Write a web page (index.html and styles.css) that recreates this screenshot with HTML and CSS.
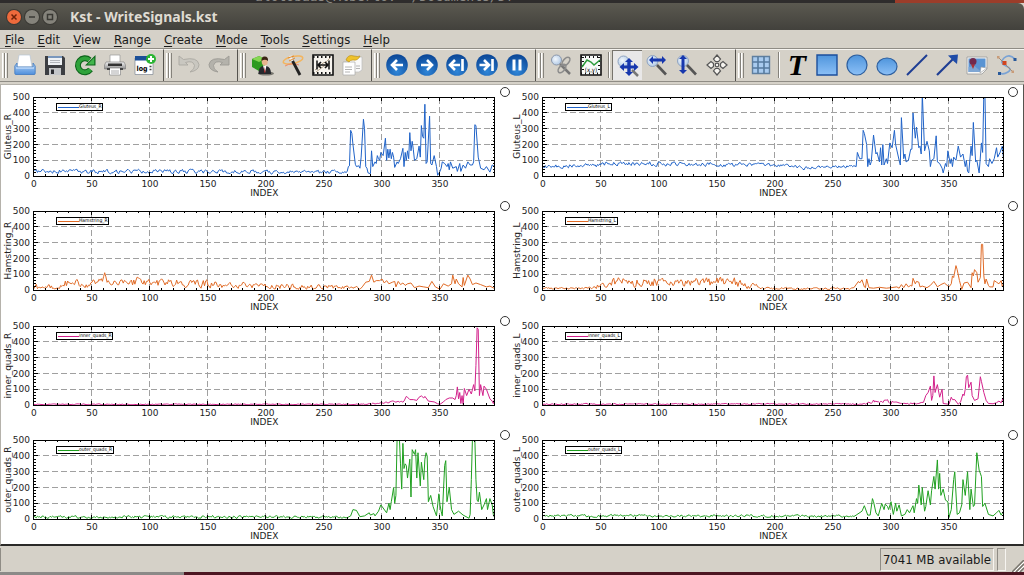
FILE: index.html
```html
<!DOCTYPE html>
<html lang="en">
<head>
  <meta charset="UTF-8" />
  <meta name="viewport" content="width=device-width, initial-scale=1.0" />
  <title>Kst - WriteSignals.kst</title>
  <link rel="stylesheet" href="styles.css">
</head>
<body>
  <div class="desktop-top"><span>alotobaas@Alberto: ~/Documents/DT</span></div>

  <header class="title-bar">
    <button class="win-btn close" aria-label="Close"><svg viewBox="0 0 14 14"><path d="M4.5 4.5l5 5M9.5 4.5l-5 5"/></svg></button>
    <button class="win-btn" aria-label="Minimize"><svg viewBox="0 0 14 14"><path d="M4 7h6"/></svg></button>
    <button class="win-btn" aria-label="Maximize"><svg viewBox="0 0 14 14"><path d="M4.5 4.5h5v5h-5z"/></svg></button>
    <h1>Kst - WriteSignals.kst</h1>
  </header>

  <nav class="menu-bar">
    <button><u>F</u>ile</button>
    <button><u>E</u>dit</button>
    <button><u>V</u>iew</button>
    <button><u>R</u>ange</button>
    <button><u>C</u>reate</button>
    <button><u>M</u>ode</button>
    <button><u>T</u>ools</button>
    <button><u>S</u>ettings</button>
    <button><u>H</u>elp</button>
  </nav>

  <svg class="defs" aria-hidden="true">
    <defs>
      <linearGradient id="blue" x1="0" y1="0" x2="0" y2="1"><stop offset="0" stop-color="#4f95dc"/><stop offset="1" stop-color="#8cc0f7"/></linearGradient>
      <linearGradient id="tray" x1="0" y1="0" x2="0" y2="1"><stop offset="0" stop-color="#b5d5f7"/><stop offset="1" stop-color="#4f8fdc"/></linearGradient>
      <radialGradient id="ball" cx=".5" cy=".8" r=".8"><stop offset="0" stop-color="#2f86d8"/><stop offset="1" stop-color="#0a4595"/></radialGradient>
      <radialGradient id="lens" cx=".4" cy=".4" r=".7"><stop offset="0" stop-color="#f3f8fd"/><stop offset="1" stop-color="#a9c3e2"/></radialGradient>
      <linearGradient id="steel" x1="0" y1="0" x2="0" y2="1"><stop offset="0" stop-color="#f4f4f4"/><stop offset="1" stop-color="#8d8d8d"/></linearGradient>
    </defs>
  </svg>

  <div class="tool-bar">
    <div class="group">
      <button aria-label="Open"><svg viewBox="0 0 22 22"><path d="M5 1h11l2 12H3z" fill="#fff" stroke="#b8c6d6" stroke-width=".7"/><path d="M3 9L.8 12v7.500q0 1 1 1h18.400q1 0 1-1V12L19 9v4H3z" fill="url(#tray)" stroke="#3f78c0" stroke-width=".8"/><path d="M2 14h18" stroke="#d9eaff"/></svg></button>
      <button aria-label="Save"><svg viewBox="0 0 22 22"><path d="M1 2h18l2 2v17H1z" fill="#3d3f43"/><path d="M4 2h14v9H4z" fill="#eef1f4"/><path d="M4 2h14v2H4z" fill="#7997bd"/><path d="M6 6.500h10M6 8.500h10" stroke="#b4b8bd"/><path d="M5 14h12v7H5z" fill="#c4c6c8"/><path d="M7 15.500h3V20H7z" fill="#2c2d30"/></svg></button>
      <button aria-label="Reload"><svg viewBox="0 0 22 22"><path d="M16.500 15.500A7 7 0 1 1 15.500 6" fill="none" stroke="#0d641b" stroke-width="6"/><path d="M21.500 1v10.500H11z" fill="#0d641b"/><path d="M16.500 15.500A7 7 0 1 1 15.500 6" fill="none" stroke="#2fa23b" stroke-width="3.800"/><path d="M20.300 3.500v7h-7z" fill="#43b54d"/></svg></button>
      <button aria-label="Print"><svg viewBox="0 0 22 22"><path d="M6 1h10v8H6z" fill="#fff" stroke="#999" stroke-width=".7"/><path d="M2 8h18l1.500 3v4H.5v-4z" fill="url(#steel)" stroke="#777" stroke-width=".6"/><path d="M4 9.500h14v2.500H4z" fill="#333"/><path d="M5.500 14h11v7h-11z" fill="#fff" stroke="#888" stroke-width=".7"/><path d="M7 17h8M7 19h8" stroke="#aaa"/><path d="M3 15h3M16 15h3" stroke="#444" stroke-width="2"/></svg></button>
      <button aria-label="Log"><svg viewBox="0 0 22 22"><path d="M1 4h18v16.500H1z" fill="#fff" stroke="#7f8894" stroke-width=".7"/><path d="M1 2h17v4.500H1z" fill="#1b4f98"/><text x="2.500" y="17" class="log-text">log</text><path d="M15.500 12.500h2M15.500 15.500h2" stroke="#444" stroke-width="1.500"/><circle cx="17" cy="5" r="5" fill="#2bb534"/><path d="M17 2v6M14 5h6" stroke="#fff" stroke-width="2"/></svg></button>
    </div>
    <div class="group">
      <button aria-label="Undo" disabled><svg viewBox="0 0 22 22"><path d="M1 2v9h9L7.500 8.500Q15 6 16.500 11.500 17 15 12 18q9-1.500 9-7.500Q19.500 2.500 5.500 5.500z" fill="#c9c7c0" stroke="#aaa8a1" stroke-width=".9"/></svg></button>
      <button aria-label="Redo" disabled><svg viewBox="0 0 22 22"><path d="M21 2v9h-9l2.500-2.500Q7 6 5.500 11.500 5 15 10 18q-9-1.500-9-7.500Q2.500 2.500 16.500 5.500z" fill="#b4b2ab" stroke="#9c9a94" stroke-width=".9"/></svg></button>
    </div>
    <div class="group">
      <button aria-label="Data manager"><svg viewBox="0 0 22 22"><path d="M0 5l7-3 6 3v9l-6 3-7-4z" fill="#2d9a20"/><path d="M0 5l7 3 6-3-6-3z" fill="#86d653"/><ellipse cx="14" cy="19.500" rx="8" ry="2" fill="#77756e"/><path d="M6.500 20q0-7 4-8h4q4.500 1 4.500 8z" fill="#25282d"/><path d="M11 11.500h3.500l-1.500 7z" fill="#fff"/><path d="M12.700 12.500l.8 6h-1.400z" fill="#b12020"/><ellipse cx="12.700" cy="7.500" rx="3" ry="4" fill="#e6b58e"/><path d="M9.500 7Q9 2.500 12.700 2.500 16.500 2.500 16 7q-3-2.500-6.500 0z" fill="#3b2414"/></svg></button>
      <button aria-label="Data wizard"><svg viewBox="0 0 22 22"><ellipse cx="11" cy="6" rx="10" ry="3.500" fill="none" stroke="#f3b55f" stroke-width="1.500" transform="rotate(-12 11 6)"/><path d="M3 12Q10 8 17 11" fill="none" stroke="#f08a6a"/><path d="M9 4l9 17" stroke="#222" stroke-width="2.800"/><path d="M8 2l2.500 5" stroke="#f0f0ee" stroke-width="3"/><path d="M6 4l6-2M7 7l6-3" stroke="#e58b2c"/></svg></button>
      <button aria-label="Change data sample ranges"><svg viewBox="0 0 22 22"><path d="M1 1h20v20H1z" fill="#f7f4ee" stroke="#111" stroke-width="1.600"/><path d="M1 3h20M1 19h20" stroke="#111" stroke-width="2" stroke-dasharray="1.500 2.500"/><path d="M3 16l5-4 3-3 3-1 5-5M4 18l8-6 6-3" fill="none" stroke="#b9a78e"/><path d="M5 6.500v9M17 6.500v9" stroke="#111" stroke-width="1.500"/><path d="M6 11h10M9 8l-3 3 3 3M13 8l3 3-3 3" fill="none" stroke="#111" stroke-width="1.600"/></svg></button>
      <button aria-label="Change data file"><svg viewBox="0 0 22 22"><path d="M7 3h13v13l-3 2H7z" fill="#fafafa" stroke="#bbb" stroke-width=".7"/><path d="M1 8h12v13H1z" fill="#fff" stroke="#aaa" stroke-width=".7"/><path d="M3 13h7M3 15.500h7M3 18h5M14 12h4M14 14.500h4" stroke="#b4b4b4"/><path d="M4 6Q6 0 12 2q4 1 6 0-2 5-7 4Q8 6 7 8z" fill="#efc229" stroke="#b58a10" stroke-width=".6"/></svg></button>
    </div>
    <div class="group">
      <button aria-label="Back"><svg viewBox="0 0 22 22"><circle cx="11" cy="11" r="10.800" fill="url(#ball)"/><path d="M17 11H7M11 6l-5 5 5 5" class="nav-mark"/></svg></button>
      <button aria-label="Forward"><svg viewBox="0 0 22 22"><circle cx="11" cy="11" r="10.800" fill="url(#ball)"/><path d="M5 11h10M11 6l5 5-5 5" class="nav-mark"/></svg></button>
      <button aria-label="Go to beginning"><svg viewBox="0 0 22 22"><circle cx="11" cy="11" r="10.800" fill="url(#ball)"/><path d="M14 11H5M9 6l-5 5 5 5M16.500 5v12" class="nav-mark"/></svg></button>
      <button aria-label="Go to end"><svg viewBox="0 0 22 22"><circle cx="11" cy="11" r="10.800" fill="url(#ball)"/><path d="M3.500 11H12M8 6l5 5-5 5M16.500 5v12" class="nav-mark"/></svg></button>
      <button aria-label="Pause"><svg viewBox="0 0 22 22"><circle cx="11" cy="11" r="10.800" fill="url(#ball)"/><path d="M8 5.500v11M14 5.500v11" stroke="#fff" stroke-width="3"/></svg></button>
    </div>
    <div class="group">
      <button aria-label="Tied zoom"><svg viewBox="0 0 22 22"><circle cx="6.500" cy="6" r="5" fill="url(#lens)" stroke="#8b97aa"/><path d="M10 10l10 10" stroke="#777" stroke-width="2.500"/><ellipse cx="16" cy="7.500" rx="2.800" ry="5" transform="rotate(40 16 7.500)" fill="none" stroke="#8c8c8c" stroke-width="1.600"/><ellipse cx="12" cy="14.500" rx="2.800" ry="5" transform="rotate(40 12 14.500)" fill="none" stroke="#8c8c8c" stroke-width="1.600"/></svg></button>
      <button aria-label="Data mode"><svg viewBox="0 0 22 22"><path d="M1 1h20v20H1z" fill="#f8faf8" stroke="#111" stroke-width="1.600"/><path d="M1 3h20M1 19.500h20" stroke="#111" stroke-width="2" stroke-dasharray="1 3"/><path d="M3 3v16M19 3v16" stroke="#111" stroke-width="2" stroke-dasharray="1 3"/><path d="M2 13l5-7 4 2 3 3 6-5" fill="none" stroke="#2b9b3a" stroke-width="1.500"/><text x="11" y="17.500" text-anchor="middle" class="xy-text">(x,y)</text></svg></button>
      <span class="sep"></span>
      <button class="pressed" aria-label="XY zoom"><svg viewBox="0 0 22 22"><circle cx="6.500" cy="6.500" r="5.500" fill="url(#lens)" stroke="#8fa3c0"/><path d="M15 15l6 6" stroke="#777" stroke-width="2.500"/><path d="M12 3l4 4h-2.300v3.500H17V8l4.500 4-4.500 4v-2.500h-3.300V17H16l-4 4-4-4h2.300v-3.500H7V16l-4.500-4L7 8v2.500h3.300V7H8z" fill="#1737ad"/></svg></button>
      <button aria-label="X zoom"><svg viewBox="0 0 22 22"><circle cx="6.500" cy="7" r="5.500" fill="url(#lens)" stroke="#8fa3c0"/><path d="M11 11l9 9.500" stroke="#555" stroke-width="2.600"/><path d="M3 6l4-4v2.500h9V2l4 4-4 4V7.500H7V10z" fill="#1737ad"/></svg></button>
      <button aria-label="Y zoom"><svg viewBox="0 0 22 22"><circle cx="7" cy="7" r="5.500" fill="url(#lens)" stroke="#8fa3c0"/><path d="M11 11l9 9.500" stroke="#555" stroke-width="2.600"/><path d="M7 1l4 4H8.500v11H11l-4 4-4-4h2.500V5H3z" fill="#1737ad"/></svg></button>
      <button aria-label="Layout mode"><svg viewBox="0 0 22 22"><g fill="#f5f3ee" stroke="#555" stroke-width="1.200"><path d="M11 1l3.500 4-2 2.500h-3l-2-2.500zM11 21l3.500-4-2-2.500h-3l-2 2.500zM1 11l4-3.500 2.500 2v3l-2.500 2zM21 11l-4-3.500-2.500 2v3l2.500 2z"/><circle cx="11" cy="11" r="1.800"/></g></svg></button>
    </div>
    <div class="group last">
      <button aria-label="Plot"><svg viewBox="0 0 22 22"><path d="M2.500 2.500h17v17h-17z" fill="#a9cbef" stroke="#5f7f9f" stroke-width="1.400"/><path d="M2.500 8h17M2.500 14h17M8 2.500v17M14 2.500v17" stroke="#557a9e" stroke-width="1.600"/></svg></button>
      <span class="sep"></span>
      <button class="label-tool" aria-label="Label">T</button>
      <button aria-label="Box"><svg viewBox="0 0 22 22"><path d="M1 1h20v20H1z" fill="url(#blue)" stroke="#1c4f9c" stroke-width="1.400"/></svg></button>
      <button aria-label="Circle"><svg viewBox="0 0 22 22"><circle cx="11" cy="11" r="10" fill="url(#blue)" stroke="#2d5f9f" stroke-width="1.200"/></svg></button>
      <button aria-label="Ellipse"><svg viewBox="0 0 22 22"><ellipse cx="11" cy="12.500" rx="10" ry="8.500" fill="url(#blue)" stroke="#2d5f9f" stroke-width="1.200"/></svg></button>
      <button aria-label="Line"><svg viewBox="0 0 22 22"><path d="M1 21L21 1" stroke="#1d3d93" stroke-width="2"/></svg></button>
      <button aria-label="Arrow"><svg viewBox="0 0 22 22"><path d="M1 21L17 5" stroke="#1d3d93" stroke-width="2.200"/><path d="M22 .5L21 10l-3-2.500-3.500-3.500L12 1.500z" fill="#1f4ca8"/></svg></button>
      <button aria-label="Picture"><svg viewBox="0 0 22 22"><path d="M1 3h20v12l-5 5H1z" fill="#f7f7f5" stroke="#999" stroke-width=".8"/><path d="M2.500 4.500h17V13L15 18H2.500z" fill="#5a94d3"/><path d="M2.500 13l6-1 7 6h-13z" fill="#7fa6d3"/><circle cx="7" cy="7.500" r="3.500" fill="#722a4d"/><path d="M5 10.500L7 15l2-4.500" fill="#a33"/><path d="M14 19l1-6 6 1z" fill="#fff" stroke="#999" stroke-width=".6"/></svg></button>
      <button aria-label="SVG"><svg viewBox="0 0 22 22"><path d="M19 5Q13-1 8 4t2 8 2 6-8 1" fill="none" stroke="#7ba3d4" stroke-width="1.700"/><path d="M2 3l15 15" stroke="#a08a70"/><path d="M6.500 7h4v4h-4z" fill="#d2451e"/><path d="M17.500 4h3v3h-3zM2 18h3v3H2z" fill="#28599a"/><path d="M1 2h2.500v2.500H1zM15.500 16.500H18V19h-2.500z" fill="#c99c79"/></svg></button>
    </div>
  </div>

  <main class="plots" id="plots"></main>

  <footer class="status-bar">
    <span class="status-message"></span>
    <span class="status-memory">7041 MB available</span>
    <span class="status-slot"></span>
    <svg class="size-grip" viewBox="0 0 12 12"><path d="M0 12L12 0M4 12l8-8M8 12l4-4" stroke="#77746d" stroke-width="1.500"/><path d="M2 12L12 2M6 12l6-6" stroke="#fff"/></svg>
  </footer>
  <div class="desktop-bottom"></div>

  <script src="plots.js"></script>
</body>
</html>
```
FILE: styles.css
```css
:root {
  --panel: #d5d1c8;
  --panel-dark: #8f8c85;
  --panel-light: #f6f4f0;
  --text-color: #1a1a1a;
}

* {
  box-sizing: border-box;
}

body {
  margin: 0;
  height: 100vh;
  display: flex;
  flex-direction: column;
  overflow: hidden;
  background-color: var(--panel);
  color: var(--text-color);
  font-family: 'DejaVu Sans Condensed', 'DejaVu Sans', sans-serif;
  font-size: 13px;
}

button {
  padding: 0;
  border: none;
  background: none;
  color: inherit;
  font: inherit;
}

.defs {
  position: absolute;
  width: 0;
  height: 0;
}

.desktop-top {
  height: 3px;
  flex: none;
  overflow: hidden;
  padding-left: 255px;
  display: flex;
  align-items: flex-end;
  background: linear-gradient(90deg, #2e2c2c 87.4%, #9c3d2a 87.4%);
  color: #8a8883;
  font-family: 'DejaVu Sans Mono', monospace;
  font-size: 13px;
  line-height: 12px;
  white-space: nowrap;
}

.title-bar {
  height: 27px;
  flex: none;
  display: flex;
  align-items: center;
  gap: 4px;
  padding: 0 7px;
  background: linear-gradient(#5b5950, #42413c);
  border-radius: 0 6px 0 0;
}

.title-bar h1 {
  margin: 0 0 0 9px;
  font-family: 'Noto Sans', sans-serif;
  font-size: 14px;
  font-weight: 700;
  color: #dfdbd2;
}

.win-btn {
  width: 14px;
  height: 14px;
  border-radius: 50%;
  background-color: #85837b;
  box-shadow: 0 0 0 1px #3a3934;
}

.win-btn svg {
  display: block;
  fill: none;
  stroke: #3a3934;
  stroke-width: 1.5;
}

.win-btn.close {
  background-color: #ee6a3c;
}

.win-btn.close svg {
  stroke: #6d2108;
}

.menu-bar {
  height: 18px;
  flex: none;
  display: flex;
  align-items: center;
  gap: 13px;
  padding-left: 5px;
}

.menu-bar u {
  text-underline-offset: 2px;
}

.tool-bar {
  height: 34px;
  flex: none;
  display: flex;
  border-top: 1px solid var(--panel-dark);
  border-bottom: 1px solid var(--panel-dark);
}

.group {
  position: relative;
  flex: none;
  display: flex;
  align-items: center;
  padding: 0 3px 1px 10px;
  border-top: 1px solid var(--panel-light);
  border-right: 1px solid #55534e;
}

.group.last {
  flex: 1;
  border-right: none;
}

/* drag handle: two raised ridges */
.group::before {
  content: "";
  position: absolute;
  left: 2px;
  top: 3px;
  bottom: 3px;
  width: 6px;
  background: linear-gradient(90deg, #fff 0 1px, #e6e3dc 1px 2px, #85827b 2px 3px, #fff 3px 4px, #e6e3dc 4px 5px, #85827b 5px 6px);
}

.group button {
  width: 30px;
  height: 30px;
  flex: none;
  display: flex;
  align-items: center;
  justify-content: center;
}

.group button svg {
  width: 22px;
  height: 22px;
}

.group .pressed {
  background-color: #e9e8e8;
  border-top: 1px solid #77746d;
  border-left: 1px solid #77746d;
}

.group .label-tool {
  font-family: 'Liberation Serif', serif;
  font-size: 30px;
  line-height: 28px;
  font-weight: 700;
  font-style: italic;
  color: #000;
}

.sep {
  width: 2px;
  height: 26px;
  margin: 0 2px;
  border-left: 1px solid #85827b;
  border-right: 1px solid #fff;
}

.nav-mark {
  fill: none;
  stroke: #fff;
  stroke-width: 2.6;
}

.log-text {
  font-size: 7px;
  font-weight: 700;
}

.xy-text {
  font-size: 6px;
}

.plots {
  flex: 1;
  min-height: 0;
  margin-top: 2px;
  padding: 0 4px 2px 1px;
  display: grid;
  grid-template-columns: 1fr 1fr;
  grid-auto-rows: 1fr;
  background-color: #fff;
  border: 1px solid #b5b2ab;
  border-right-color: #55534e;
  border-bottom: 2px solid #2b2a28;
}

.plot {
  position: relative;
  margin: 0;
  min-width: 0;
  min-height: 0;
}

.plot svg {
  display: block;
  width: 100%;
  height: 100%;
  overflow: hidden;
}

.plot-tie {
  position: absolute;
  top: 2px;
  right: 1px;
  width: 10px;
  height: 10px;
  margin: 0;
  appearance: none;
  border: 1px solid #333;
  border-radius: 50%;
  background-color: #fff;
}

.plot text {
  font-family: 'DejaVu Sans', sans-serif;
  font-size: 9px;
  fill: #222;
}

.plot .legend-text {
  font-family: 'DejaVu Sans Condensed', 'DejaVu Sans', sans-serif;
  font-size: 5px;
  fill: #000;
}

.frame,
.ticks,
.grid-lines,
.legend-box {
  fill: none;
  stroke: #000;
  shape-rendering: crispEdges;
}

.grid-lines {
  stroke: #a0a0a0;
  stroke-dasharray: 6 3;
}

.legend-box {
  fill: #fff;
}

.trace {
  fill: none;
  stroke-width: 1;
  stroke-linejoin: round;
}

.legend-line {
  fill: none;
  shape-rendering: crispEdges;
}

.status-bar {
  height: 26px;
  flex: none;
  display: flex;
  align-items: center;
  gap: 3px;
  padding-top: 1px;
}

.status-message {
  flex: 1;
  height: 23px;
  border-left: 1px solid var(--panel-dark);
}

.status-memory,
.status-slot {
  height: 23px;
  border: 1px solid;
  border-color: var(--panel-dark) var(--panel-light) var(--panel-light) var(--panel-dark);
}

.status-memory {
  padding: 0 2px;
  line-height: 21px;
}

.status-slot {
  width: 9px;
}

.size-grip {
  width: 12px;
  height: 12px;
  margin-left: 3px;
  align-self: flex-end;
}

.desktop-bottom {
  height: 3px;
  flex: none;
  background: linear-gradient(90deg, #8b8a88 18%, #4d1622 18%);
}
```
FILE: plots.js
```js
const SAMPLES = 397;
const Y_MAX = 500;
const NS = 'http://www.w3.org/2000/svg';

// base: [index, level, noise] of the resting part, peaks: index,value pairs
const signals = [
  {
    name: 'Gluteus_R', color: '#1f62c8',
    base: [[0, 32, 16], [60, 28, 16], [110, 30, 15], [200, 26, 14], [270, 25, 12]],
    peaks: '271,60 272,65 273,290 274,270 275,200 277,75 278,60 280,65 281,50 282,120 284,360 285,300 286,60 287,50 288,20 290,15 291,160 292,60 294,90 295,80 296,130 297,110 298,100 299,150 301,130 303,240 304,100 305,170 306,115 307,170 308,110 309,150 310,120 311,55 313,90 314,80 316,110 318,176 319,60 320,150 321,100 322,160 323,110 324,275 325,160 326,220 327,170 328,100 330,110 332,190 333,120 334,320 335,250 336,240 337,455 338,80 339,90 341,380 342,80 343,70 345,130 347,60 348,5 350,30 351,50 352,90 354,80 356,60 357,80 358,40 359,90 361,50 364,60 365,30 367,80 368,30 370,70 372,50 374,90 376,70 378,70 379,90 380,325 381,320 383,120 385,50 388,40 390,60 393,25 395,70 397,60'
  },
  {
    name: 'Gluteus_L', color: '#1f62c8',
    base: [[0, 60, 14], [45, 68, 14], [60, 82, 18], [170, 72, 14], [215, 65, 10], [225, 50, 12], [268, 62, 10]],
    peaks: '270,60 271,150 273,110 275,110 276,290 277,270 279,200 280,60 281,110 282,70 283,90 285,260 287,140 288,150 290,90 291,180 292,70 293,200 294,70 296,110 297,80 299,210 301,180 303,290 304,200 307,100 308,70 309,370 311,110 312,140 313,90 315,100 317,170 318,170 319,400 321,240 322,310 324,180 325,190 326,140 327,520 329,160 331,220 333,160 334,60 335,100 337,110 339,255 340,90 342,80 344,50 345,20 347,80 348,60 349,160 351,80 352,110 353,60 354,120 356,100 358,190 360,120 362,140 364,60 365,100 366,30 367,20 369,190 370,130 371,340 373,90 374,100 376,20 378,210 379,150 380,520 381,520 382,80 384,60 385,110 387,80 389,110 391,180 392,120 394,150 396,190 397,110'
  },
  {
    name: 'Hamstring_R', color: '#e06a26',
    base: [[0, 20, 22], [22, 18, 12], [25, 40, 28], [50, 45, 30], [59, 60, 20], [61, 112, 6], [63, 50, 20], [88, 50, 28], [91, 82, 14], [94, 50, 28], [150, 42, 30], [160, 32, 24], [220, 25, 20], [280, 15, 12]],
    peaks: '281,5 283,20 286,50 289,55 291,95 293,50 295,60 298,60 300,70 302,45 304,60 306,40 309,50 311,55 312,20 314,55 316,35 318,45 320,30 322,40 325,45 328,15 332,25 336,20 340,15 343,55 346,20 350,5 353,40 357,25 360,40 361,95 363,40 364,70 366,40 369,20 370,80 371,30 374,95 376,70 378,35 381,45 385,35 390,20 393,25 397,10'
  },
  {
    name: 'Hamstring_L', color: '#e06a26',
    base: [[0, 9, 7], [38, 10, 8], [50, 28, 20], [60, 52, 36], [165, 48, 34], [180, 30, 24], [192, 10, 8], [266, 9, 6]],
    peaks: '268,15 272,55 273,45 275,65 277,20 278,15 279,70 281,15 285,12 290,18 296,12 300,15 305,20 307,12 309,35 311,15 313,40 315,20 317,30 318,25 319,75 321,40 322,55 324,50 325,20 327,25 331,15 334,30 337,55 340,20 343,35 346,45 350,20 352,40 353,90 354,80 356,155 357,130 359,60 361,5 363,45 366,50 369,15 370,110 371,90 372,130 374,110 375,50 377,80 378,290 379,290 380,90 381,40 382,70 384,30 385,20 388,20 389,60 391,50 393,40 395,60 396,20 397,40'
  },
  {
    name: 'inner_quads_R', color: '#d2208b',
    base: [[0, 5, 3], [285, 5, 3], [300, 16, 8], [318, 20, 8]],
    peaks: '319,25 321,55 322,50 324,35 327,35 330,30 332,50 334,58 336,45 337,55 340,25 345,20 348,8 350,5 353,20 355,35 358,45 361,45 363,35 364,60 365,115 366,40 367,80 368,10 369,60 370,5 371,105 373,60 375,100 377,70 379,130 380,90 381,250 382,490 383,480 384,60 385,130 387,60 388,120 390,100 393,40 395,25 396,10 397,40'
  },
  {
    name: 'inner_quads_L', color: '#d2208b',
    base: [[0, 6, 4], [278, 7, 4], [285, 26, 16], [300, 20, 14], [308, 7, 5], [326, 12, 6]],
    peaks: '328,18 330,60 332,80 334,120 335,30 336,60 337,185 338,80 340,130 342,50 344,100 345,10 350,5 352,50 353,35 355,35 358,5 360,20 362,70 363,60 364,100 365,180 366,190 367,110 369,145 370,60 372,30 375,40 377,180 378,150 380,80 382,30 384,10 388,8 391,15 393,25 395,15 397,50'
  },
  {
    name: 'outer_quads_R', color: '#1fa01f',
    base: [[0, 14, 9], [60, 13, 9], [130, 16, 12], [270, 12, 8]],
    peaks: '273,20 275,60 278,55 281,15 285,20 289,40 290,25 293,35 294,20 297,50 299,90 301,70 304,40 306,100 307,60 308,110 310,200 311,100 312,150 313,510 315,510 316,350 317,190 318,480 319,320 320,350 321,340 322,260 324,380 325,140 326,440 328,410 329,440 330,260 331,420 333,210 334,360 336,250 337,380 338,420 339,400 340,110 342,150 344,80 347,20 349,160 350,90 351,50 352,20 354,340 355,370 356,110 358,200 360,60 362,30 366,50 370,25 375,5 376,30 377,250 378,510 380,510 381,250 382,120 383,110 384,170 386,60 388,90 390,130 391,60 393,130 395,90 396,30 397,10'
  },
  {
    name: 'outer_quads_L', color: '#1fa01f',
    base: [[0, 20, 9], [140, 22, 9], [268, 18, 8]],
    peaks: '270,25 275,50 277,85 280,25 282,25 284,130 285,110 287,40 289,20 292,100 294,60 295,95 297,80 298,60 300,110 302,30 304,100 305,50 307,90 309,20 312,30 314,60 316,40 319,85 320,40 322,130 323,100 324,215 326,90 327,200 329,50 330,80 332,180 334,90 335,180 337,270 338,190 340,375 341,190 342,290 343,150 345,190 347,120 349,110 350,10 352,60 354,250 355,300 357,30 359,40 361,90 362,250 364,150 366,300 368,60 369,190 371,80 372,90 374,420 376,310 378,270 379,80 381,100 384,30 388,20 391,40 393,55 395,25 397,50'
  }
];

function samplesOf(signal, seed) {
  let state = seed * 7919 + 17;
  const random = () => {
    state = (state * 16807) % 2147483647;
    return state / 2147483647 - 0.5;
  };
  random();
  const points = [];
  const base = signal.base;
  let noise = 0;
  for (let i = 0, k = 0; i <= base[base.length - 1][0]; i++) {
    while (k < base.length - 2 && i > base[k + 1][0]) k++;
    const [x0, l0, n0] = base[k];
    const [x1, l1, n1] = base[k + 1];
    const t = (i - x0) / (x1 - x0);
    noise = noise * 0.35 + random() * 1.6;
    const value = l0 + (l1 - l0) * t + (n0 + (n1 - n0) * t) * noise;
    points.push([i, Math.max(3, value)]);
  }
  signal.peaks.split(' ').forEach((pair) => points.push(pair.split(',').map(Number)));
  return points;
}

function add(parent, tag, attrs, text) {
  const el = document.createElementNS(NS, tag);
  for (const key in attrs) el.setAttribute(key, attrs[key]);
  if (text !== undefined) el.textContent = text;
  parent.appendChild(el);
  return el;
}

function draw(svg, signal, points) {
  const width = svg.clientWidth;
  const height = svg.clientHeight;
  const left = 32;
  const right = width - 16;
  const top = 12;
  const bottom = height - 23;
  const px = (v) => left + (v / SAMPLES) * (right - left);
  const py = (v) => bottom - (v / Y_MAX) * (bottom - top);

  svg.innerHTML = '';
  svg.setAttribute('viewBox', `0 0 ${width} ${height}`);

  let grid = '';
  let ticks = '';
  for (let v = 100; v < Y_MAX; v += 100) grid += `M${left} ${py(v)}H${right}`;
  for (let v = 50; v < SAMPLES; v += 50) grid += `M${px(v)} ${bottom}V${top}`;
  for (let v = 10; v < SAMPLES; v += 10) {
    const len = v % 50 ? 2 : 4;
    ticks += `M${px(v)} ${top}v${len}M${px(v)} ${bottom}v${-len}`;
  }
  for (let v = 20; v < Y_MAX; v += 20) {
    const len = v % 100 ? 2 : 4;
    ticks += `M${left} ${py(v)}h${len}M${right} ${py(v)}h${-len}`;
  }
  add(svg, 'path', { class: 'grid-lines', d: grid });

  const clip = add(svg, 'clipPath', { id: `clip-${signal.name}` });
  add(clip, 'rect', { x: left, y: top, width: right - left, height: bottom - top });
  add(svg, 'polyline', {
    class: 'trace',
    stroke: signal.color,
    'clip-path': `url(#clip-${signal.name})`,
    points: points.map(([x, y]) => `${px(x).toFixed(1)},${py(y).toFixed(1)}`).join(' ')
  });
  add(svg, 'path', { class: 'ticks', d: ticks });
  add(svg, 'rect', { class: 'frame', x: left, y: top, width: right - left, height: bottom - top });

  for (let v = 0; v <= Y_MAX; v += 100) {
    add(svg, 'text', { x: left - 4, y: py(v) + 3, 'text-anchor': 'end' }, v);
  }
  for (let v = 0; v < SAMPLES; v += 50) {
    add(svg, 'text', { x: px(v), y: bottom + 11, 'text-anchor': 'middle' }, v);
  }
  add(svg, 'text', { x: (left + right) / 2, y: bottom + 20, 'text-anchor': 'middle' }, 'INDEX');
  const middle = (top + bottom) / 2;
  add(svg, 'text', { x: 9, y: middle, 'text-anchor': 'middle', transform: `rotate(-90 9 ${middle})` }, signal.name);

  const box = add(svg, 'rect', { class: 'legend-box', x: left + 23, y: top + 6, height: 7 });
  add(svg, 'path', { class: 'legend-line', stroke: signal.color, d: `M${left + 24} ${top + 10}h21` });
  const label = add(svg, 'text', { class: 'legend-text', x: left + 45, y: top + 11 }, signal.name);
  box.setAttribute('width', Math.ceil(label.getComputedTextLength()) + 23);
}

const plots = signals.map((signal, i) => {
  const figure = document.createElement('figure');
  figure.className = 'plot';
  const svg = add(figure, 'svg', { role: 'img', 'aria-label': signal.name });
  const tie = document.createElement('input');
  tie.type = 'checkbox';
  tie.className = 'plot-tie';
  tie.setAttribute('aria-label', `Tie ${signal.name}`);
  figure.appendChild(tie);
  document.getElementById('plots').appendChild(figure);
  return { svg, signal, points: samplesOf(signal, i + 1) };
});

const drawAll = () => plots.forEach((p) => draw(p.svg, p.signal, p.points));
window.addEventListener('resize', drawAll);
drawAll();
```
